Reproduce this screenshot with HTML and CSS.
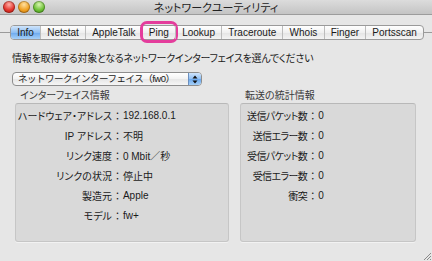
FILE: index.html
```html
<!DOCTYPE html>
<html lang="ja">
<head>
  <meta charset="UTF-8" />
  <title>ネットワークユーティリティ</title>
  <link rel="stylesheet" href="styles.css">
</head>
<body>
  <div class="window">
    <div class="titlebar">
      <div class="lights">
        <span class="light red"></span>
        <span class="light orange"></span>
        <span class="light green"></span>
      </div>
      <div class="title">ネットワークユーティリティ</div>
    </div>

    <div class="content">
      <div class="tab-row">
        <div class="tab-line left"></div>
        <div class="tabs">
          <div class="tab selected">Info</div>
          <div class="tab">Netstat</div>
          <div class="tab">AppleTalk</div>
          <div class="tab marked">Ping</div>
          <div class="tab">Lookup</div>
          <div class="tab">Traceroute</div>
          <div class="tab">Whois</div>
          <div class="tab">Finger</div>
          <div class="tab">Portsscan</div>
        </div>
        <div class="tab-line right"></div>
      </div>

      <p class="prompt">情報を取得する対象となるネットワークインターフェイスを選んでください</p>

      <div class="popup">
        <span class="popup-text">ネットワークインターフェイス（fw0）</span>
        <span class="popup-arrows">
          <svg width="6" height="9" viewBox="0 0 6 9"><path d="M3 0.5 L5.5 3.5 L0.5 3.5 Z M3 8.5 L5.5 5.5 L0.5 5.5 Z" fill="#111"/></svg>
        </span>
      </div>

      <div class="groups">
        <div class="group iface">
          <div class="group-label">インターフェイス情報</div>
          <div class="group-box">
            <span class="key">ハードウェア・アドレス</span><span class="sep">：</span><span class="val">192.168.0.1</span>
            <span class="key">IP アドレス</span><span class="sep">：</span><span class="val">不明</span>
            <span class="key">リンク速度</span><span class="sep">：</span><span class="val">0 Mbit／秒</span>
            <span class="key">リンクの状況</span><span class="sep">：</span><span class="val">停止中</span>
            <span class="key">製造元</span><span class="sep">：</span><span class="val">Apple</span>
            <span class="key">モデル</span><span class="sep">：</span><span class="val">fw+</span>
          </div>
        </div>
        <div class="group stats">
          <div class="group-label">転送の統計情報</div>
          <div class="group-box">
            <span class="key">送信パケット数</span><span class="sep">：</span><span class="val">0</span>
            <span class="key">送信エラー数</span><span class="sep">：</span><span class="val">0</span>
            <span class="key">受信パケット数</span><span class="sep">：</span><span class="val">0</span>
            <span class="key">受信エラー数</span><span class="sep">：</span><span class="val">0</span>
            <span class="key">衝突</span><span class="sep">：</span><span class="val">0</span>
          </div>
        </div>
      </div>
    </div>

    <svg class="grip" width="8" height="8" viewBox="0 0 8 8">
      <path d="M8 1 L1 8 M8 4 L4 8 M8 7 L7 8" stroke="#8a8a8a" stroke-width="1"/>
    </svg>
  </div>
</body>
</html>
```

FILE: styles.css
```css
body {
  margin: 0;
  background: #e6e6e6;
  font-family: "Liberation Sans", "Noto Sans CJK JP", sans-serif;
  color: #1a1a1a;
}

.window {
  position: relative;
  width: 432px;
  height: 261px;
  overflow: hidden;
  background: #e6e6e6;
}

.titlebar {
  height: 14px;
  display: flex;
  align-items: center;
  position: relative;
  background: linear-gradient(#dcdcdc, #c4c4c4);
  border-bottom: 1px solid #9c9c9c;
}

.lights {
  display: flex;
  gap: 3px;
  margin-left: 3px;
}

.light {
  width: 12px;
  height: 12px;
  border-radius: 50%;
  box-shadow: inset 0 0 0 1px rgba(0, 0, 0, 0.25);
}

.red { background: radial-gradient(circle at 50% 30%, #ffb0a8, #e2332a 55%, #b01a12); }
.orange { background: radial-gradient(circle at 50% 30%, #ffe0a0, #f0a020 55%, #c07010); }
.green { background: radial-gradient(circle at 50% 30%, #d8f5b0, #6cc035 55%, #3f8a18); }

.title {
  position: absolute;
  left: 0;
  right: 0;
  text-align: center;
  font-size: 11px;
  font-feature-settings: "palt";
  color: #222;
}

.content {
  padding-top: 10px;
}

.tab-row {
  display: flex;
  align-items: center;
  height: 15px;
}

.tab-line {
  height: 1px;
  background: #9a9a9a;
}

.tab-line.left { width: 10px; }
.tab-line.right { flex: 1; }

.tabs {
  display: flex;
  width: 414px;
  height: 15px;
  border: 1px solid #9a9a9a;
  border-radius: 4px;
  box-sizing: border-box;
  background: linear-gradient(#ffffff, #f0f0f0 50%, #e4e4e4 51%, #f4f4f4);
}

.tab {
  flex: 1 1 auto;
  text-align: center;
  font-size: 10px;
  line-height: 13px;
  padding: 0 5px;
  border-left: 1px solid #bcbcbc;
  position: relative;
}

.tab:first-child {
  border-left: none;
  border-radius: 3px 0 0 3px;
}

.tab.selected {
  background: linear-gradient(#cfe4fb, #8fbff3 50%, #6aa8ee 51%, #a6d0f8);
}

.tab.marked::after {
  content: "";
  position: absolute;
  left: -3px;
  right: -3px;
  top: -5px;
  bottom: -4px;
  border: 3px solid #e43d9c;
  border-radius: 7px;
}

.prompt {
  margin: 12px 0 0 12px;
  font-size: 10px;
  line-height: 13px;
  letter-spacing: -0.25px;
  font-feature-settings: "palt";
}

.popup {
  display: flex;
  width: 190px;
  height: 14px;
  margin: 7px 0 0 12px;
  border: 1px solid #8e8e8e;
  border-radius: 4px;
  box-sizing: border-box;
  background: linear-gradient(#ffffff, #f2f2f2 50%, #e6e6e6 51%, #f6f6f6);
  overflow: hidden;
}

.popup-text {
  flex: 1;
  padding-left: 5px;
  font-size: 9.5px;
  line-height: 12px;
  letter-spacing: -0.5px;
}

.popup-arrows {
  width: 12px;
  display: flex;
  align-items: center;
  justify-content: center;
  background: linear-gradient(#cfe4fb, #8fbff3 50%, #6aa8ee 51%, #a6d0f8);
  border-left: 1px solid #6b8fbf;
}

.groups {
  display: flex;
  gap: 11px;
  margin: 3px 0 0 15px;
}

.group-label {
  margin-left: 5px;
  font-size: 10px;
  line-height: 14px;
  color: #3a3a3a;
  font-feature-settings: "palt";
}

.group-box {
  display: grid;
  grid-template-columns: auto 11px 1fr;
  grid-auto-rows: 20px;
  align-content: start;
  align-items: center;
  height: 139px;
  box-sizing: border-box;
  padding-top: 1px;
  background: #d9d9d9;
  border: 1px solid #c6c6c6;
  border-top-color: #b8b8b8;
  border-radius: 3px;
  box-shadow: 0 1px 0 #f2f2f2;
  font-size: 10px;
}

.iface .group-box {
  width: 214px;
  padding-left: 2px;
}

.stats .group-box {
  width: 176px;
  padding-left: 6px;
}

.key {
  text-align: right;
  font-feature-settings: "palt";
}

.stats .key {
  letter-spacing: -0.6px;
}

.sep {
  text-align: center;
}

.grip {
  position: absolute;
  right: 1px;
  bottom: 1px;
}
```
